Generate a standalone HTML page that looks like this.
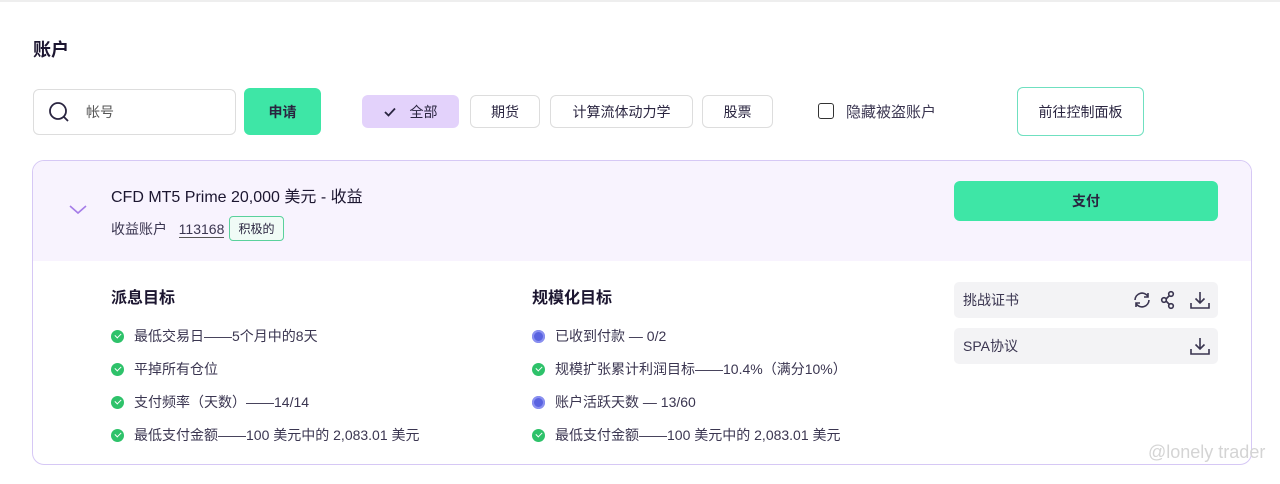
<!DOCTYPE html>
<html><head><meta charset="utf-8"><style>
*{box-sizing:border-box;margin:0;padding:0}
body{width:1280px;height:484px;background:#fff;font-family:"Liberation Sans","Noto Sans CJK SC",sans-serif;color:#2a2540;position:relative;overflow:hidden}
.a{position:absolute}
.topline{left:0;top:0;width:1280px;height:2px;background:#eee}
h1{position:absolute;left:33px;top:36px;font-size:18px;font-weight:700;color:#1c1630}
.btn{position:absolute;border:1px solid #ddd;border-radius:6px;font-size:14px;display:flex;align-items:center;justify-content:center;background:#fff;color:#2a2540}
.item{position:absolute;font-size:14px;color:#3a3550;display:flex;align-items:center;gap:10px}
.dot{width:13px;height:13px;border-radius:50%;background:#2ec26a;display:inline-block;position:relative}
.dot:after{content:"";position:absolute;left:3.5px;top:3px;width:5px;height:3px;border-left:1.6px solid #fff;border-bottom:1.6px solid #fff;transform:rotate(-45deg)}
.blue{background:#5a63e0;box-shadow:inset 0 0 0 2px #8a90f0}
.blue:after{display:none}
.doc{position:absolute;left:954px;width:264px;height:36px;background:#f3f3f5;border-radius:5px;font-size:14px;color:#3a3550;padding:0 9px;display:flex;align-items:center}
</style></head><body>
<div class="a topline"></div>
<h1>账户</h1>
<div class="btn" style="left:33px;top:89px;width:203px;height:46px;justify-content:flex-start;padding-left:14px;gap:16px;color:#555">
<svg width="22" height="22" viewBox="0 0 22 22"><circle cx="10" cy="10" r="8" fill="none" stroke="#2a2540" stroke-width="1.8"/><path d="M16 16l4 4" stroke="#2a2540" stroke-width="1.8"/></svg>帐号</div>
<div class="btn" style="left:244px;top:88px;width:77px;height:47px;background:#3ee6a6;border:none;font-weight:700">申请</div>
<div class="btn" style="left:362px;top:95px;width:97px;height:33px;background:#e3d2fb;border:none;gap:14px"><svg width="12" height="10" viewBox="0 0 12 10"><path d="M1 5l3.5 3.5L11 1.5" fill="none" stroke="#2a2540" stroke-width="1.8"/></svg>全部</div>
<div class="btn" style="left:470px;top:95px;width:70px;height:33px">期货</div>
<div class="btn" style="left:550px;top:95px;width:143px;height:33px">计算流体动力学</div>
<div class="btn" style="left:702px;top:95px;width:71px;height:33px">股票</div>
<div class="a" style="left:818px;top:103px;width:16px;height:16px;border:1.5px solid #333;border-radius:3px"></div>
<div class="a" style="left:846px;top:101px;font-size:15px;color:#3a3550">隐藏被盗账户</div>
<div class="btn" style="left:1017px;top:87px;width:127px;height:49px;border-color:#6fe0c0">前往控制面板</div>
<div class="a" style="left:32px;top:160px;width:1220px;height:305px;border:1px solid #d6c8f5;border-radius:12px;overflow:hidden">
<div style="height:100px;background:#f8f3fe"></div>
</div>
<svg class="a" style="left:69px;top:205px" width="18" height="10" viewBox="0 0 18 10"><path d="M1 1l8 7 8-7" fill="none" stroke="#a57ce8" stroke-width="1.6"/></svg>
<div class="a" style="left:111px;top:183px;font-size:16px;color:#1c1630">CFD MT5 Prime 20,000 美元 - 收益</div>
<div class="a" style="left:111px;top:219px;font-size:14px;color:#3a3550">收益账户&nbsp;&nbsp;&nbsp;<span style="border-bottom:1px solid #555">113168</span></div>
<div class="a" style="left:229px;top:216px;width:55px;height:25px;border:1px solid #5ad19c;border-radius:4px;background:#f0fbf6;font-size:12px;display:flex;align-items:center;justify-content:center">积极的</div>
<div class="btn" style="left:954px;top:181px;width:264px;height:40px;background:#3ee6a6;border:none;font-weight:700">支付</div>
<div class="a" style="left:111px;top:284px;font-size:16px;font-weight:700;color:#1c1630">派息目标</div>
<div class="a" style="left:532px;top:284px;font-size:16px;font-weight:700;color:#1c1630">规模化目标</div>
<div class="item" style="left:111px;top:326px"><span class="dot"></span>最低交易日——5个月中的8天</div>
<div class="item" style="left:111px;top:359px"><span class="dot"></span>平掉所有仓位</div>
<div class="item" style="left:111px;top:392px"><span class="dot"></span>支付频率（天数）——14/14</div>
<div class="item" style="left:111px;top:425px"><span class="dot"></span>最低支付金额——100 美元中的 2,083.01 美元</div>
<div class="item" style="left:532px;top:326px"><span class="dot blue"></span>已收到付款 — 0/2</div>
<div class="item" style="left:532px;top:359px"><span class="dot"></span>规模扩张累计利润目标——10.4%（满分10%）</div>
<div class="item" style="left:532px;top:392px"><span class="dot blue"></span>账户活跃天数 — 13/60</div>
<div class="item" style="left:532px;top:425px"><span class="dot"></span>最低支付金额——100 美元中的 2,083.01 美元</div>
<div class="doc" style="top:282px">挑战证书
<svg class="a" style="left:178px;top:7px" width="82" height="22" viewBox="0 0 82 22" fill="none" stroke="#3a3550" stroke-width="1.6"><path d="M3 11a7 7 0 0 1 13-3.5M17 11a7 7 0 0 1-13 3.5M16 4v4h-4M4 18v-4h4"/><circle cx="32" cy="11" r="2.3"/><circle cx="39" cy="5" r="2.3"/><circle cx="39" cy="17" r="2.3"/><path d="M34 10l3-3M34 12l3 3"/><path d="M68 3v11M63.5 9.5l4.5 4.5 4.5-4.5M59 14v5h18v-5"/></svg></div>
<div class="doc" style="top:328px">SPA协议
<svg class="a" style="left:234px;top:7px" width="22" height="22" viewBox="0 0 22 22" fill="none" stroke="#3a3550" stroke-width="1.6"><path d="M12 3v11M7.5 9.5l4.5 4.5 4.5-4.5M3 14v5h18v-5"/></svg></div>
<div class="a" style="left:1148px;top:442px;font-size:18px;color:#d4d4d4">@lonely trader</div>
</body></html>
